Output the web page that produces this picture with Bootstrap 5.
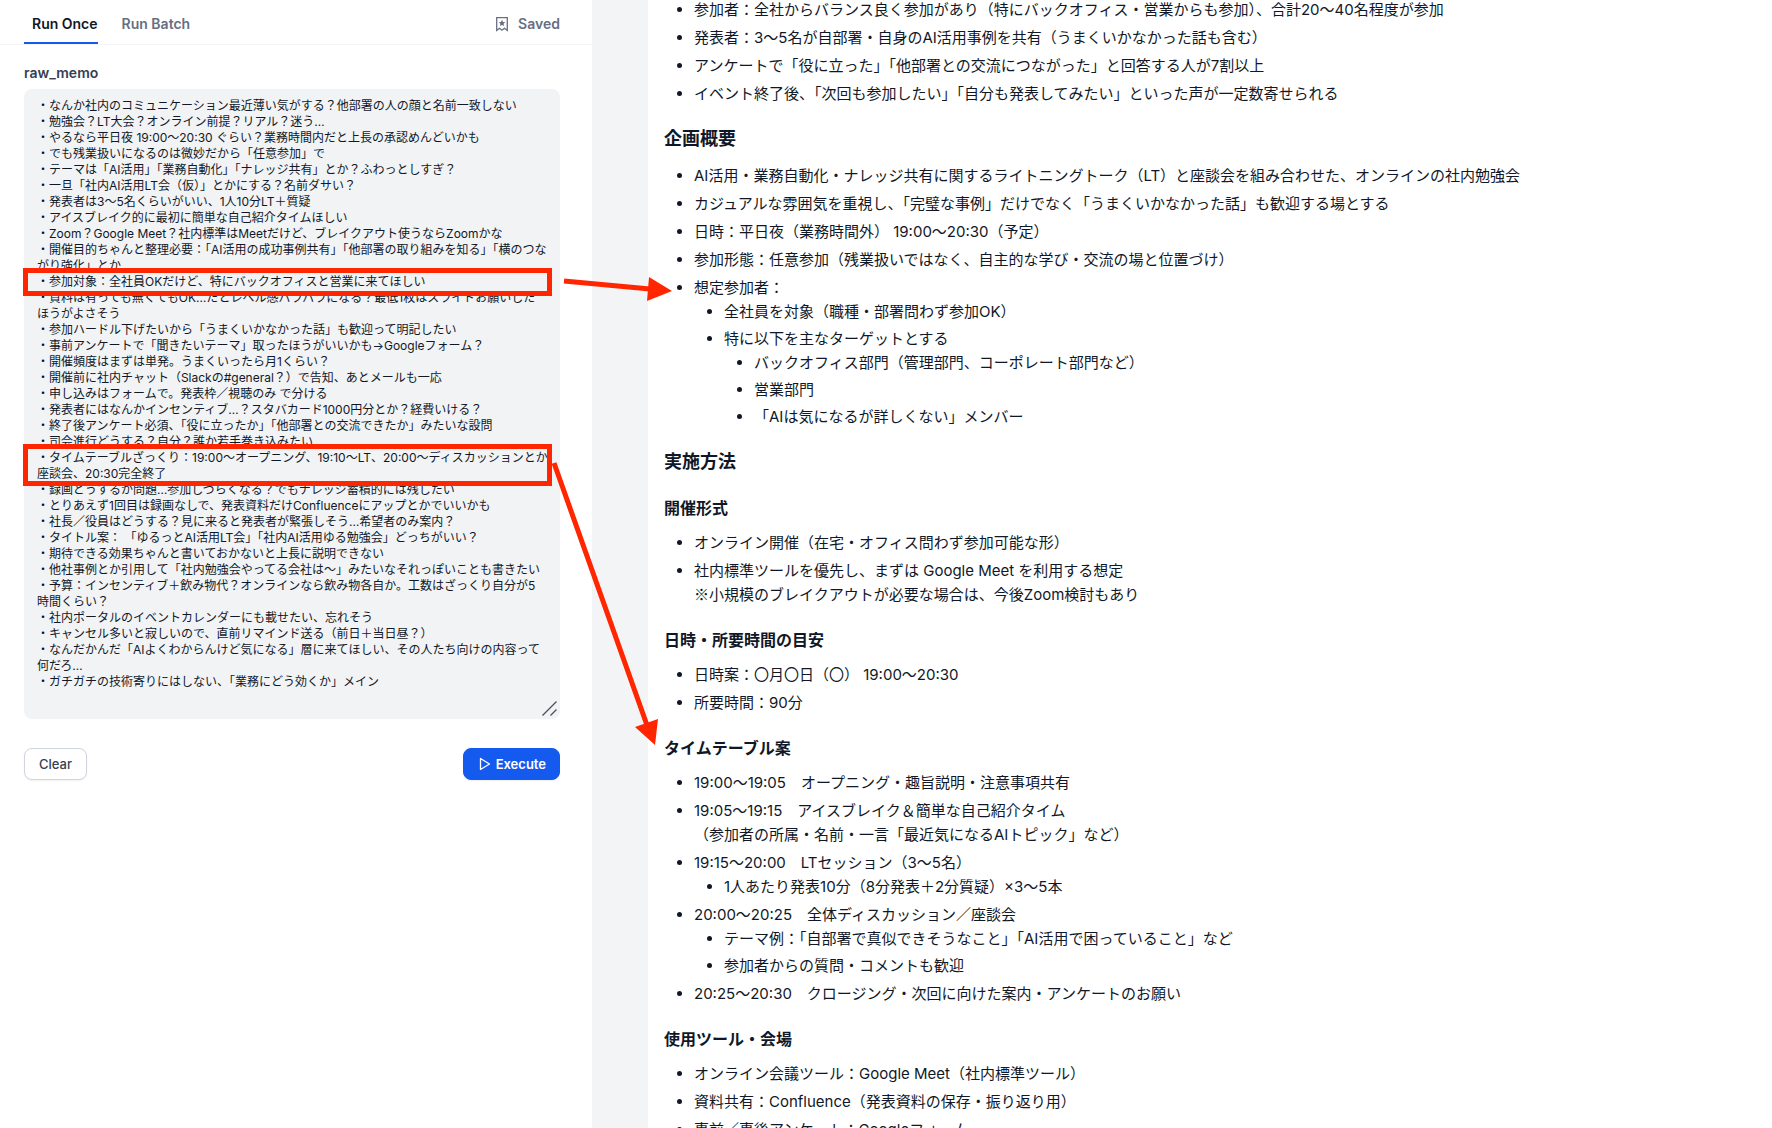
<!DOCTYPE html>
<html lang="ja">
<head>
<meta charset="utf-8">
<meta name="viewport" content="width=device-width, initial-scale=1">
<title>Run Once</title>
<link href="https://cdn.jsdelivr.net/npm/bootstrap@5.3.0/dist/css/bootstrap.min.css" rel="stylesheet">
<style>
  body { font-family: Inter, "Noto Sans CJK JP", sans-serif; color: #101828; background: #fff; }
  .shell { height: 100vh; }
  .input-pane { flex: 0 0 592px; }
  .tab-row { height: 45px; padding: 0 32px 0 24px; border-bottom: 1px solid #f2f4f7; }
  .tab-link { display: flex; align-items: center; height: 44px; padding: 6px 0 0 8px; font-size: 14px; font-weight: 600; line-height: 20px; color: #676f83; text-decoration: none; border-bottom: 2px solid transparent; }
  .tab-link.active { color: #101828; border-bottom-color: #155aef; }
  .saved-link { padding-left: 0; }
  .memo-form { padding: 18px 32px 0 24px; }
  .field-label { font-size: 14px; line-height: 20px; font-weight: 600; color: #354052; margin-bottom: 6px; }
  .memo-box { height: 630px; padding: 8px 8px 8px 12px; font-size: 12px; line-height: 16px; color: #101828; background: #f2f3f5; border: 1px solid #f2f3f5; border-radius: 8px; resize: none; overflow: hidden; display: block; width: 100%; }
  .grip { right: 1px; bottom: 1px; }
  .action-row { padding-top: 29px; }
  .run-btn { height: 32px; font-size: 13px; line-height: 18px; border-radius: 8px; box-shadow: 0 1px 2px rgba(16, 24, 40, .06); }
  .clear-btn { color: #354052; background: #fff; border: 1px solid #d0d5dd; font-weight: 500; padding: 0 14px; }
  .exec-btn { color: #fff; background: #155aef; border: 1px solid #155aef; font-weight: 600; padding: 0 13px 0 14px; }
  .result-pane { min-width: 0; background: #f3f4f6; padding-left: 56px; }
  .result-sheet { background: #fff; padding: 0 16px; margin-top: -2px; font-size: 15px; line-height: 24px; }
  .result-sheet ul { padding-left: 30px; margin: 0; list-style: disc; }
  .result-sheet li + li { margin-top: 4px; }
  .result-sheet li li + li { margin-top: 3px; }
  .result-sheet h2 { font-size: 18px; line-height: 26px; font-weight: 600; margin: 20px 0 12px; }
  .result-sheet h3 { font-size: 16px; line-height: 24px; font-weight: 600; margin: 21px 0 11px; }
  .cjk-sign { font-family: "Noto Sans CJK JP", sans-serif; line-height: 1; }
  .callout-frame { left: 23px; width: 529px; border: 5px solid #ff2600; pointer-events: none; }
  .frame-target { top: 268px; height: 28px; }
  .frame-schedule { top: 444px; height: 42px; }
  .arrows { left: 0; top: 0; pointer-events: none; }
</style>
<script src="https://cdn.jsdelivr.net/npm/bootstrap@5.3.0/dist/js/bootstrap.bundle.min.js"></script>
</head>
<body>
<div class="shell d-flex position-relative overflow-hidden">
  <section class="input-pane">
    <nav class="tab-row d-flex">
      <a class="tab-link active" href="#once">Run Once</a>
      <a class="tab-link ms-3" href="#batch">Run Batch</a>
      <a class="tab-link saved-link ms-auto" href="#saved">
        <svg class="me-2" width="16" height="16" viewBox="0 0 16 16" fill="none" stroke="currentColor" stroke-width="1.3" aria-hidden="true"><path d="M2.7 1.6H13.3V14.4L10.4 12.3L8 14.2L5.6 12.3L2.7 14.4Z"/><path d="M8 3.8L9 5.9L11.3 6.2L9.6 7.8L10 10.1L8 9L6 10.1L6.4 7.8L4.7 6.2L7 5.9Z" fill="currentColor" stroke="none"/></svg>
        Saved</a>
    </nav>
    <form class="memo-form">
      <label class="field-label d-block" for="memo">raw_memo</label>
      <div class="position-relative">
        <textarea class="memo-box" id="memo" spellcheck="false">・なんか社内のコミュニケーション最近薄い気がする？他部署の人の顔と名前一致しない
・勉強会？LT大会？オンライン前提？リアル？迷う…
・やるなら平日夜 19:00〜20:30 ぐらい？業務時間内だと上長の承認めんどいかも
・でも残業扱いになるのは微妙だから「任意参加」で
・テーマは「AI活用」「業務自動化」「ナレッジ共有」とか？ふわっとしすぎ？
・一旦「社内AI活用LT会（仮）」とかにする？名前ダサい？
・発表者は3〜5名くらいがいい、1人10分LT＋質疑
・アイスブレイク的に最初に簡単な自己紹介タイムほしい
・Zoom？Google Meet？社内標準はMeetだけど、ブレイクアウト使うならZoomかな
・開催目的ちゃんと整理必要：「AI活用の成功事例共有」「他部署の取り組みを知る」「横のつながり強化」とか
・参加対象：全社員OKだけど、特にバックオフィスと営業に来てほしい
・資料は有っても無くてもOK…だとレベル感バラバラになる？最低1枚はスライドお願いした
ほうがよさそう
・参加ハードル下げたいから「うまくいかなかった話」も歓迎って明記したい
・事前アンケートで「聞きたいテーマ」取ったほうがいいかも→Googleフォーム？
・開催頻度はまずは単発。うまくいったら月1くらい？
・開催前に社内チャット（Slackの#general？）で告知、あとメールも一応
・申し込みはフォームで。発表枠／視聴のみ で分ける
・発表者にはなんかインセンティブ…？スタバカード1000円分とか？経費いける？
・終了後アンケート必須、「役に立ったか」「他部署との交流できたか」みたいな設問
・司会進行どうする？自分？誰か若手巻き込みたい
・タイムテーブルざっくり：19:00〜オープニング、19:10〜LT、20:00〜ディスカッションとか座談会、20:30完全終了
・録画どうするか問題…参加しづらくなる？でもナレッジ蓄積的には残したい
・とりあえず1回目は録画なしで、発表資料だけConfluenceにアップとかでいいかも
・社長／役員はどうする？見に来ると発表者が緊張しそう…希望者のみ案内？
・タイトル案： 「ゆるっとAI活用LT会」「社内AI活用ゆる勉強会」どっちがいい？
・期待できる効果ちゃんと書いておかないと上長に説明できない
・他社事例とか引用して「社内勉強会やってる会社は〜」みたいなそれっぽいことも書きたい
・予算：インセンティブ＋飲み物代？オンラインなら飲み物各自か。工数はざっくり自分が5
時間くらい？
・社内ポータルのイベントカレンダーにも載せたい、忘れそう
・キャンセル多いと寂しいので、直前リマインド送る（前日＋当日昼？）
・なんだかんだ「AIよくわからんけど気になる」層に来てほしい、その人たち向けの内容って
何だろ…
・ガチガチの技術寄りにはしない、「業務にどう効くか」メイン</textarea>
        <svg class="grip position-absolute" width="18" height="18" viewBox="0 0 18 18" fill="none" stroke="#4b5057" stroke-width="1.3" aria-hidden="true"><path d="M1.5 15.5L15.5 1.5M9.5 15.5L15.5 9.5"/></svg>
      </div>
      <div class="action-row d-flex justify-content-between">
        <button type="button" class="btn run-btn clear-btn">Clear</button>
        <button type="button" class="btn run-btn exec-btn d-flex align-items-center gap-1">
          <svg width="14" height="14" viewBox="0 0 14 14" fill="none" stroke="currentColor" stroke-width="1.3" stroke-linejoin="round" aria-hidden="true"><path d="M2.5 1.5L11.5 7L2.5 12.5Z"/></svg>
          Execute</button>
      </div>
    </form>
  </section>
  <main class="result-pane flex-grow-1">
    <article class="result-sheet">
      <ul>
        <li>参加者：全社からバランス良く参加があり（特にバックオフィス・営業からも参加）、合計20〜40名程度が参加</li>
        <li>発表者：3〜5名が自部署・自身のAI活用事例を共有（うまくいかなかった話も含む）</li>
        <li>アンケートで「役に立った」「他部署との交流につながった」と回答する人が7割以上</li>
        <li>イベント終了後、「次回も参加したい」「自分も発表してみたい」といった声が一定数寄せられる</li>
      </ul>
      <h2>企画概要</h2>
      <ul>
        <li>AI活用・業務自動化・ナレッジ共有に関するライトニングトーク（LT）と座談会を組み合わせた、オンラインの社内勉強会</li>
        <li>カジュアルな雰囲気を重視し、「完璧な事例」だけでなく「うまくいかなかった話」も歓迎する場とする</li>
        <li>日時：平日夜（業務時間外） 19:00〜20:30（予定）</li>
        <li>参加形態：任意参加（残業扱いではなく、自主的な学び・交流の場と位置づけ）</li>
        <li>想定参加者：
          <ul>
            <li>全社員を対象（職種・部署問わず参加OK）</li>
            <li>特に以下を主なターゲットとする
              <ul>
                <li>バックオフィス部門（管理部門、コーポレート部門など）</li>
                <li>営業部門</li>
                <li>「AIは気になるが詳しくない」メンバー</li>
              </ul>
            </li>
          </ul>
        </li>
      </ul>
      <h2>実施方法</h2>
      <h3>開催形式</h3>
      <ul>
        <li>オンライン開催（在宅・オフィス問わず参加可能な形）</li>
        <li>社内標準ツールを優先し、まずは Google Meet を利用する想定<br><span class="cjk-sign">※</span>小規模のブレイクアウトが必要な場合は、今後Zoom検討もあり</li>
      </ul>
      <h3>日時・所要時間の目安</h3>
      <ul>
        <li>日時案：〇月〇日（〇） 19:00〜20:30</li>
        <li>所要時間：90分</li>
      </ul>
      <h3>タイムテーブル案</h3>
      <ul>
        <li>19:00〜19:05　オープニング・趣旨説明・注意事項共有</li>
        <li>19:05〜19:15　アイスブレイク＆簡単な自己紹介タイム<br>（参加者の所属・名前・一言「最近気になるAIトピック」など）</li>
        <li>19:15〜20:00　LTセッション（3〜5名）
          <ul><li>1人あたり発表10分（8分発表＋2分質疑）×3〜5本</li></ul>
        </li>
        <li>20:00〜20:25　全体ディスカッション／座談会
          <ul>
            <li>テーマ例：「自部署で真似できそうなこと」「AI活用で困っていること」など</li>
            <li>参加者からの質問・コメントも歓迎</li>
          </ul>
        </li>
        <li>20:25〜20:30　クロージング・次回に向けた案内・アンケートのお願い</li>
      </ul>
      <h3>使用ツール・会場</h3>
      <ul>
        <li>オンライン会議ツール：Google Meet（社内標準ツール）</li>
        <li>資料共有：Confluence（発表資料の保存・振り返り用）</li>
        <li>事前／事後アンケート：Googleフォーム</li>
      </ul>
    </article>
  </main>
  <div class="callout-frame frame-target position-absolute"></div>
  <div class="callout-frame frame-schedule position-absolute"></div>
  <svg class="arrows position-absolute" width="700" height="780" viewBox="0 0 700 780" fill="#ff2600" stroke="#ff2600" aria-hidden="true">
    <path d="M564 281L650 289M554 463L648 728" stroke-width="5" fill="none"/>
    <path d="M649 277L672 291L647 301ZM635 727L658 719L655 745Z" stroke="none"/>
  </svg>
</div>
</body>
</html>
